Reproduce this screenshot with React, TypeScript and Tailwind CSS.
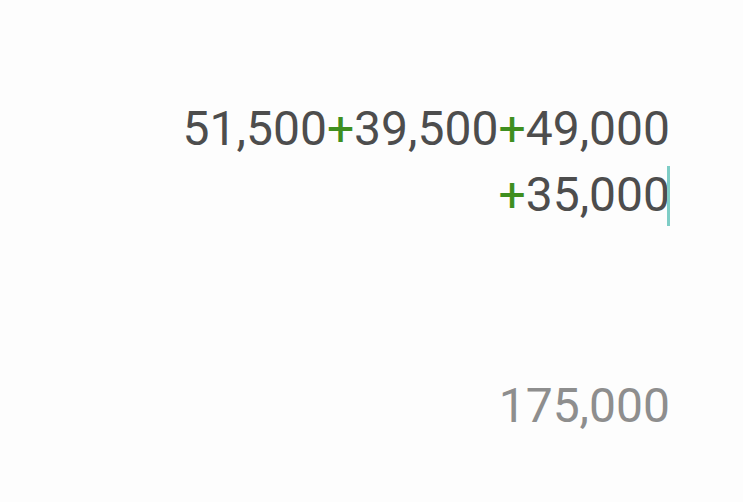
import React from "react";

const Plus = () => <span className="text-[#3f8f1f]">+</span>;

export default function App() {
  return (
    <div
      className="w-[743px] h-[502px] bg-[#fdfdfd] flex flex-col items-end pr-[73px] pt-[96px]"
      style={{ fontFamily: "Roboto, 'Noto Sans', sans-serif" }}
    >
      <div className="text-right text-[48px] leading-[66px] text-[#4d4d4d]">
        <div>
          51,500<Plus />39,500<Plus />49,000
        </div>
        <div className="relative">
          <Plus />35,000
          <span className="absolute right-0 top-[4px] w-[3px] h-[60px] bg-[#7ecdc6]" />
        </div>
      </div>
      <div className="mt-[145px] text-right text-[48px] leading-[66px] text-[#8e8e8e]">
        175,000
      </div>
    </div>
  );
}
